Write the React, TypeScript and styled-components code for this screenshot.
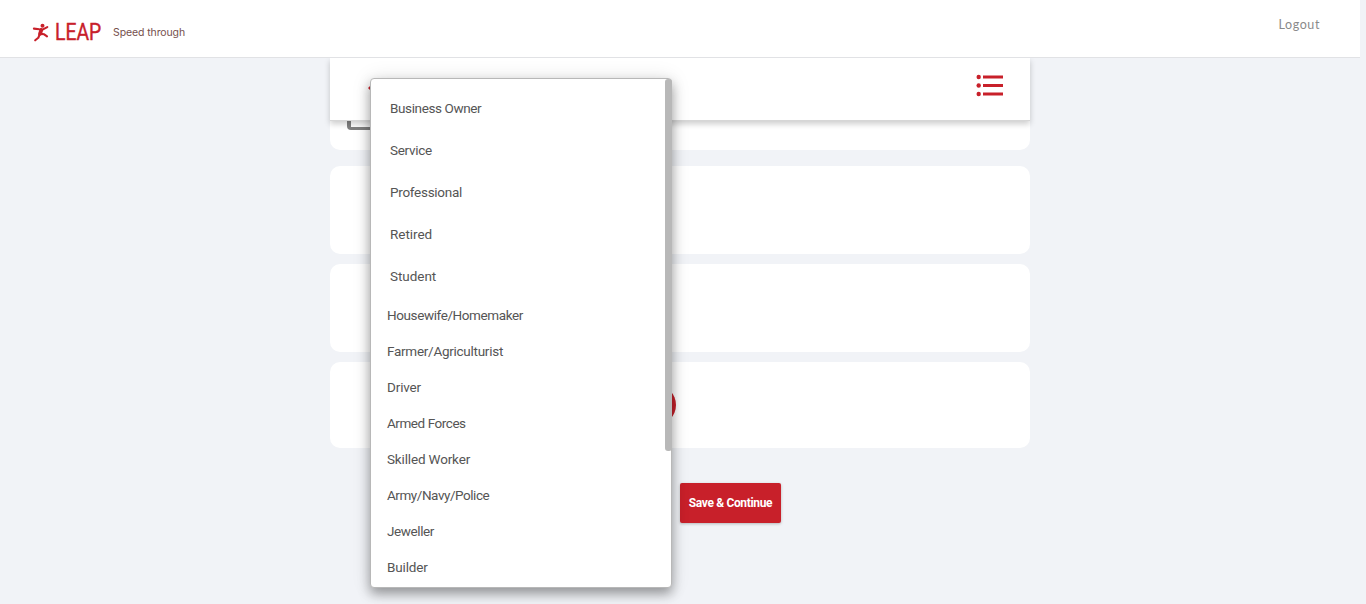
import React from 'react';
import styled, { createGlobalStyle } from 'styled-components';

const GlobalStyle = createGlobalStyle`
  * { box-sizing: border-box; }
  body { margin: 0; background: #f1f3f7; font-family: Roboto, "Liberation Sans", sans-serif; }
`;

const Page = styled.div`
  position: relative;
  height: 604px;
  overflow: hidden;
  background: #f1f3f7;
  padding-right: 6px;
`;

const Header = styled.header`
  height: 58px;
  display: flex;
  align-items: flex-start;
  justify-content: space-between;
  background: #fff;
  border-bottom: 1px solid #e1e2e5;
  padding: 0 40px 0 32px;
`;

const Brand = styled.div`
  display: flex;
  align-items: center;
  height: 65px;
`;

const Runner = styled.svg`
  width: 18px;
  height: 19px;
`;

const Wordmark = styled.span`
  width: 46px;
  margin-left: 5px;
  font-size: 23px;
  line-height: 24px;
  color: #c8202a;
  -webkit-text-stroke: 0.4px #c8202a;
  transform: scaleX(0.84);
  transform-origin: left;
  white-space: nowrap;
`;

const Tagline = styled.span`
  margin-left: 12px;
  font: 10.5px/16px Inter, sans-serif;
  letter-spacing: -0.1px;
  color: #75504d;
`;

const Logout = styled.a`
  font: 12.5px/20px Lato, sans-serif;
  letter-spacing: 0.6px;
  color: #8a8a8a;
  margin-top: 15px;
`;

const Column = styled.main`
  width: 700px;
  margin: 0 auto;
`;

const Toolbar = styled.div`
  position: relative;
  z-index: 1;
  height: 63px;
  display: flex;
  justify-content: space-between;
  padding: 16px 26px 0 37px;
  background: #fff;
  border-bottom: 1px solid #d6d6d6;
  box-shadow: 0 3px 6px rgba(0, 0, 0, 0.2);
  clip-path: inset(0 -8px -12px -8px);
`;

const BackIcon = styled.svg`
  width: 22px;
  height: 16px;
  margin-top: 6px;
`;

const ListIcon = styled.svg`
  width: 28px;
  height: 23px;
`;

const Card = styled.section<{ $height: number; $gap: number; $open?: boolean }>`
  height: ${(p) => p.$height}px;
  margin-bottom: ${(p) => p.$gap}px;
  border-radius: ${(p) => (p.$open ? '0 0 10px 10px' : '10px')};
  background: #fff;
  display: flex;
  align-items: ${(p) => (p.$open ? 'flex-start' : 'center')};
`;

const CheckFrame = styled.div`
  width: 40px;
  height: 9px;
  margin-left: 17px;
  border: 3px solid #808080;
  border-left-width: 4px;
  border-top: 0;
  border-radius: 0 0 4px 4px;
`;

const RoundToggle = styled.div`
  width: 40px;
  height: 40px;
  margin-left: 306px;
  border-radius: 50%;
  background: #c8202a;
`;

const Save = styled.button`
  display: block;
  width: 101px;
  height: 40px;
  margin: 35px 0 0 350px;
  padding: 0;
  border: 0;
  border-radius: 2px;
  background: #c8202a;
  box-shadow: 0 1px 3px rgba(0, 0, 0, 0.25);
  color: #fff;
  font: 700 12px/40px Roboto, sans-serif;
  letter-spacing: -0.35px;
  white-space: nowrap;
`;

const Menu = styled.div`
  position: absolute;
  z-index: 2;
  left: 370px;
  top: 78px;
  width: 302px;
  height: 510px;
  display: flex;
  justify-content: space-between;
  background: #fff;
  border: 1px solid #b8b8b8;
  border-radius: 4px;
  box-shadow: 0 6px 12px rgba(0, 0, 0, 0.35), 0 0 20px rgba(0, 0, 0, 0.1);
`;

const Options = styled.ul`
  list-style: none;
  margin: 0;
  padding: 8px 0 0;
`;

const Option = styled.li<{ $large?: boolean; $spacing: number }>`
  height: ${(p) => (p.$large ? 42 : 36)}px;
  line-height: ${(p) => (p.$large ? 42 : 36)}px;
  padding-left: ${(p) => (p.$large ? 19 : 16)}px;
  font-size: 13.5px;
  letter-spacing: ${(p) => p.$spacing}px;
  color: #555;
  white-space: nowrap;
`;

const Thumb = styled.div`
  width: 7px;
  height: 372px;
  margin-right: -1px;
  border-radius: 3px;
  background: #b8b8b8;
`;

const options: { label: string; large?: boolean; spacing: number }[] = [
  { label: 'Business Owner', large: true, spacing: -0.38 },
  { label: 'Service', large: true, spacing: -0.3 },
  { label: 'Professional', large: true, spacing: -0.28 },
  { label: 'Retired', large: true, spacing: -0.05 },
  { label: 'Student', large: true, spacing: -0.05 },
  { label: 'Housewife/Homemaker', spacing: -0.4 },
  { label: 'Farmer/Agriculturist', spacing: -0.27 },
  { label: 'Driver', spacing: -0.15 },
  { label: 'Armed Forces', spacing: -0.45 },
  { label: 'Skilled Worker', spacing: -0.16 },
  { label: 'Army/Navy/Police', spacing: -0.45 },
  { label: 'Jeweller', spacing: -0.4 },
  { label: 'Builder', spacing: -0.14 },
];

export default function App() {
  return (
    <Page>
      <GlobalStyle />
      <Header>
        <Brand>
          <Runner viewBox="0 0 18 19" fill="none" stroke="#c8202a" strokeLinecap="round" strokeLinejoin="round">
            <circle cx="10.5" cy="2.7" r="2" fill="#c8202a" stroke="none" />
            <path d="M1.9 5.6 7.3 6.3 10.5 6.6 15.3 4.1" strokeWidth="2.1" />
            <path d="M9.3 7 8 10.8" strokeWidth="3.8" />
            <path d="M7.5 11.7 6.3 14.8 3.2 17.3M9 10.9 12.2 11.3 15 13.4" strokeWidth="2.1" />
          </Runner>
          <Wordmark>LEAP</Wordmark>
          <Tagline>Speed through</Tagline>
        </Brand>
        <Logout>Logout</Logout>
      </Header>
      <Column>
        <Toolbar>
          <BackIcon viewBox="0 0 22 16" fill="#c8202a">
            <path d="M1 8 8 1v5.5h13v3H8V15z" />
          </BackIcon>
          <ListIcon viewBox="0 0 28 23" fill="#c8202a">
            <circle cx="2.7" cy="3" r="2.2" />
            <circle cx="2.7" cy="11.5" r="2.2" />
            <circle cx="2.7" cy="20" r="2.2" />
            <path d="M7 1.5h20v3H7zM7 10h20v3H7zM7 18.5h20v3H7z" />
          </ListIcon>
        </Toolbar>
        <Card $height={29} $gap={16} $open>
          <CheckFrame />
        </Card>
        <Card $height={88} $gap={10} />
        <Card $height={88} $gap={10} />
        <Card $height={86} $gap={0}>
          <RoundToggle />
        </Card>
        <Save>Save &amp; Continue</Save>
      </Column>
      <Menu>
        <Options>
          {options.map((o) => (
            <Option key={o.label} $large={o.large} $spacing={o.spacing}>
              {o.label}
            </Option>
          ))}
        </Options>
        <Thumb />
      </Menu>
    </Page>
  );
}
